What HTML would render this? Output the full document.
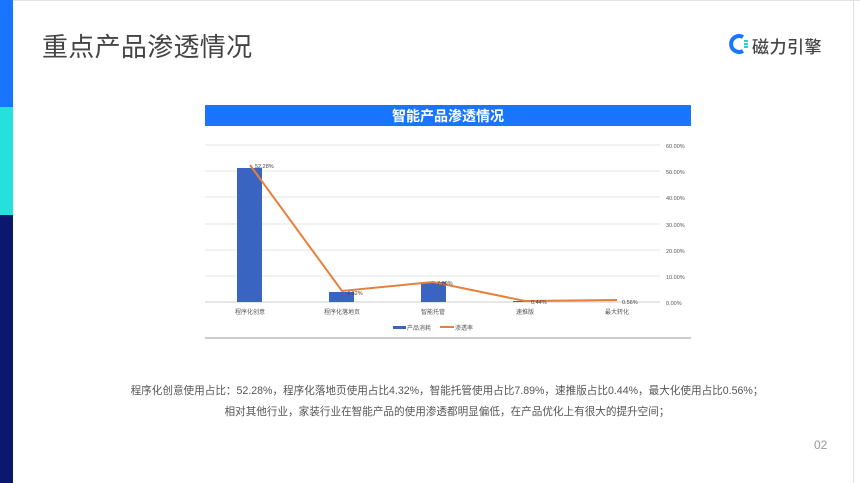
<!DOCTYPE html>
<html><head><meta charset="utf-8"><style>
body{margin:0;width:860px;height:483px;background:#fff;position:relative;overflow:hidden;font-family:"Liberation Sans","Noto Sans CJK SC",sans-serif}
.a{position:absolute}
</style></head><body>
<div class="a" style="left:0;top:0;width:13px;height:107px;background:#1a75fe"></div>
<div class="a" style="left:0;top:107px;width:13px;height:108px;background:#26e0dc"></div>
<div class="a" style="left:0;top:215px;width:13px;height:268px;background:#0c186e"></div>
<div class="a" style="left:13px;top:0;width:847px;height:1px;background:#e4e4e4"></div>
<div class="a" style="left:853px;top:0;width:1px;height:483px;background:#e0e0e0"></div>
<div class="a" style="left:42px;top:27px;font-size:26px;color:#444;letter-spacing:0.3px">重点产品渗透情况</div>
<svg class="a" style="left:728px;top:33px" width="22" height="22" viewBox="0 0 22 22"><path d="M15 4 A8 8 0 1 0 15 18" fill="none" stroke="#1a75fe" stroke-width="4"/><g stroke="#26d0dc" stroke-width="2"><path d="M16 8h4M16 11h4M16 14h4"/></g></svg>
<div class="a" style="left:752px;top:33px;font-size:17px;color:#444;font-weight:500;letter-spacing:0.5px">磁力引擎</div>
<svg class="a" style="left:205px;top:104px" width="487" height="237" viewBox="205 104 487 237" font-family="Liberation Sans,Noto Sans CJK SC,sans-serif">
<rect x="205" y="104" width="487" height="237" fill="#fff"/>
<rect x="205" y="105" width="486" height="21" fill="#1a75fe"/>
<text x="448" y="121" fill="#fff" font-size="14" font-weight="bold" text-anchor="middle">智能产品渗透情况</text>
<g stroke="#e6e6e6" stroke-width="1">
<line x1="205" y1="145" x2="660" y2="145"/><line x1="205" y1="171" x2="660" y2="171"/><line x1="205" y1="197" x2="660" y2="197"/><line x1="205" y1="224" x2="660" y2="224"/><line x1="205" y1="250" x2="660" y2="250"/><line x1="205" y1="276" x2="660" y2="276"/></g>
<line x1="205" y1="302" x2="660" y2="302" stroke="#ccc"/>
<line x1="205" y1="338" x2="691" y2="338" stroke="#ccc" stroke-width="2"/>
<g fill="#3a64c2"><rect x="237" y="168" width="25" height="134"/><rect x="329" y="292" width="25" height="10"/><rect x="421" y="282" width="25" height="20"/><rect x="513" y="301" width="25" height="1"/></g>
<polyline points="250,165 342,291 433,282 525,301 617,300" fill="none" stroke="#e7803a" stroke-width="2"/>
<g font-size="5.5" fill="#444"><text x="255" y="168">52.28%</text><text x="347" y="295">4.32%</text><text x="437" y="285">7.89%</text><text x="531" y="304">0.44%</text><text x="622" y="304">0.56%</text></g>
<g font-size="5.5" fill="#555"><text x="666" y="148">60.00%</text><text x="666" y="174">50.00%</text><text x="666" y="200">40.00%</text><text x="666" y="227">30.00%</text><text x="666" y="253">20.00%</text><text x="666" y="279">10.00%</text><text x="666" y="305">0.00%</text></g>
<g font-size="6" fill="#555" text-anchor="middle"><text x="250" y="314">程序化创意</text><text x="342" y="314">程序化落地页</text><text x="433" y="314">智能托管</text><text x="525" y="314">速推版</text><text x="617" y="314">最大转化</text></g>
<rect x="393" y="326" width="13" height="3" fill="#3a64c2"/><text x="407" y="330" font-size="6" fill="#555">产品消耗</text>
<rect x="440" y="326" width="14" height="2" fill="#e7803a"/><text x="455" y="330" font-size="6" fill="#555">渗透率</text>
</svg>
<div class="a" style="left:0;width:894px;top:381px;text-align:center;font-size:10.6px;color:#555;line-height:21px">程序化创意使用占比：52.28%，程序化落地页使用占比4.32%，智能托管使用占比7.89%，速推版占比0.44%，最大化使用占比0.56%；<br>相对其他行业，家装行业在智能产品的使用渗透都明显偏低，在产品优化上有很大的提升空间；</div>
<div class="a" style="left:814px;top:438px;font-size:12px;color:#999">02</div>
</body></html>
